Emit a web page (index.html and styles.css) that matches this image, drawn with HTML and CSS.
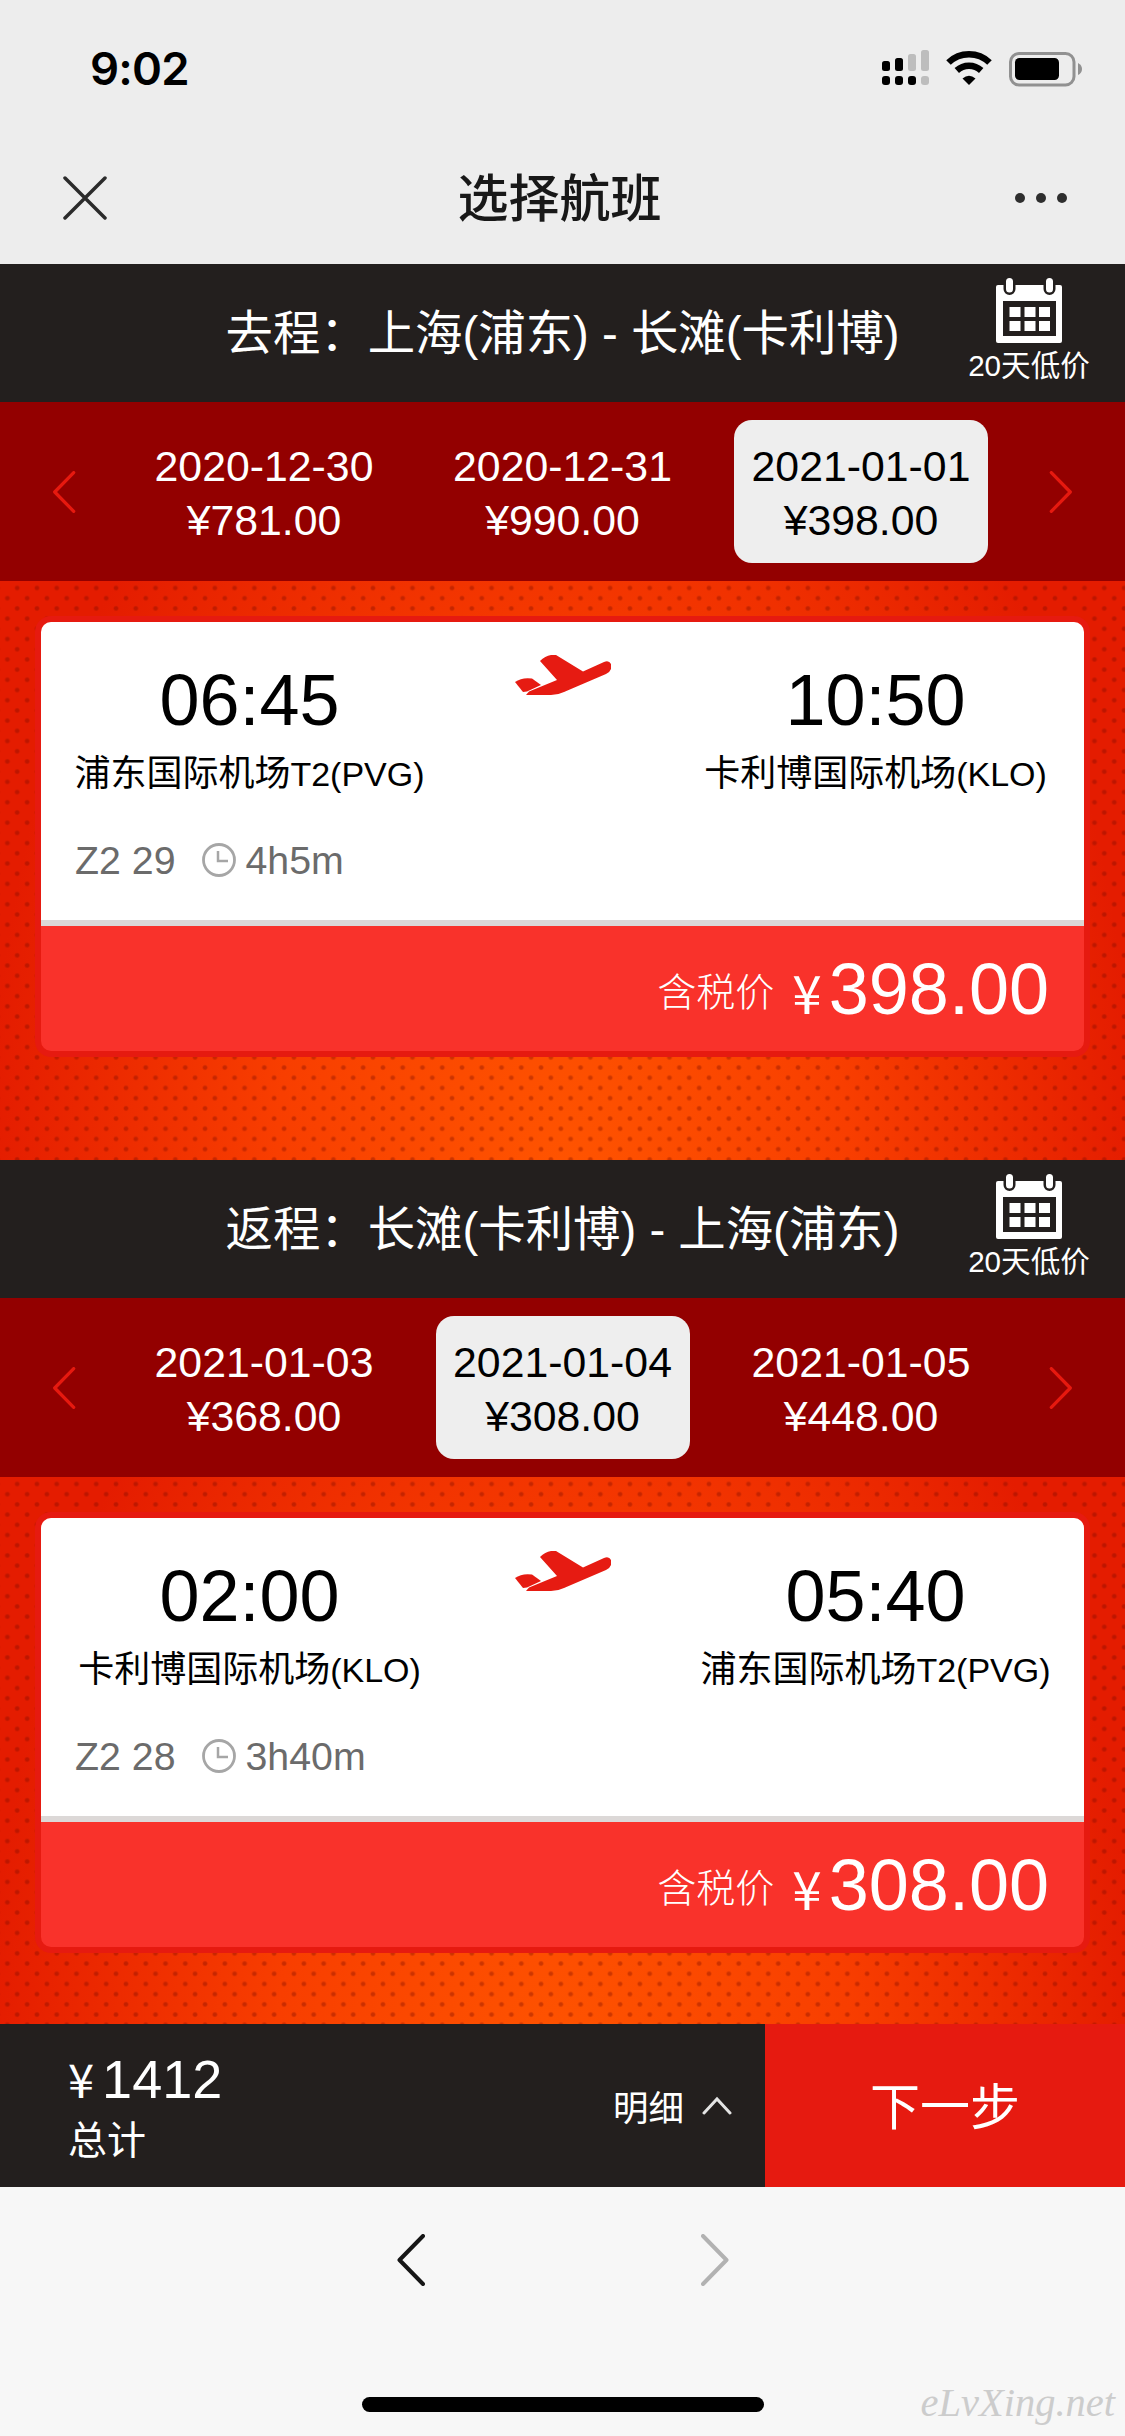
FILE: index.html
```html
<!DOCTYPE html>
<html lang="zh-CN">
<head>
<meta charset="utf-8">
<title>选择航班</title>
<link rel="stylesheet" href="styles.css">
</head>
<body>
<svg width="0" height="0" class="defs">
  <symbol id="calendar" viewBox="0 0 66 65">
    <path fill="#fff" d="M2 7H64Q66 7 66 9V63Q66 65 64 65H2Q0 65 0 63V9Q0 7 2 7Z"/>
    <path fill="#231f1e" d="M7 23H60V58H7Z"/>
    <path stroke="#231f1e" stroke-width="12" stroke-linecap="round" d="M13.5 0V11M53.5 0V11"/>
    <path stroke="#fff" stroke-width="7" stroke-linecap="round" d="M13.5 3.5V11M53.5 3.5V11"/>
    <path fill="#fff" d="M13.5 29h11v10h-11zM28.5 29h11v10h-11zM43 29h11v10h-11zM13.5 43h11v10h-11zM28.5 43h11v10h-11zM43 43h11v10h-11z"/>
  </symbol>
  <symbol id="plane" viewBox="0 0 96 40">
    <path fill="#e61b12" d="M25 6Q30 1 36 0H41L68 16.500L89 7Q94 5 96 9V14Q95 17 91 19L49 37Q43 40 36 40H11L14 36.500L42 25Z"/>
    <path fill="#e61b12" d="M0 27Q7 22 17 23.500L26 30L12 36.500L8 37Z"/>
  </symbol>
  <symbol id="clock" viewBox="0 0 34 34">
    <circle cx="17" cy="17" r="15.5" fill="none" stroke="#a6a6a6" stroke-width="2.8"/>
    <path fill="none" stroke="#a6a6a6" stroke-width="2.5" d="M16 8V18H26"/>
  </symbol>
  <symbol id="left" viewBox="0 0 28 52"><path fill="none" stroke="currentColor" stroke-linecap="round" stroke-linejoin="round" d="M26 2L2.5 26L26 50"/></symbol>
  <symbol id="right" viewBox="0 0 28 52"><path fill="none" stroke="currentColor" stroke-linecap="round" stroke-linejoin="round" d="M2 2L25.5 26L2 50"/></symbol>
</svg>

<header class="status">
  <span class="time">9:02</span>
  <svg class="status-icons" viewBox="0 0 202 40" width="202" height="40">
    <g fill="#000"><rect x="1" y="13" width="8" height="10" rx="2.5"/><rect x="14" y="10" width="8" height="13" rx="2.5"/><rect x="1" y="28" width="8" height="9" rx="3"/><rect x="14" y="28" width="8" height="9" rx="3"/><rect x="27" y="28" width="8" height="9" rx="3"/></g>
    <g fill="#bdbdbd"><rect x="27" y="6" width="8" height="17" rx="2.5"/><rect x="40" y="2" width="8" height="21" rx="2.5"/><rect x="40" y="28" width="8" height="9" rx="3"/></g>
    <g fill="none" stroke="#000" stroke-width="6.5"><path d="M67.500 14.500A29.500 29.500 0 0 1 108.500 14.500"/><path d="M75.800 22.500A18 18 0 0 1 100.200 22.500"/></g>
    <path d="M81.500 30.500Q88 25 94.500 30.500L88 37Z"/>
    <rect x="129.500" y="5.500" width="63.500" height="31.500" rx="8.5" fill="none" stroke="#919191" stroke-width="3"/>
    <rect x="134" y="10" width="44" height="22" rx="4.5"/>
    <path fill="#919191" d="M197 15Q201 17 201 21T197 27Z"/>
  </svg>
</header>
<nav class="titlebar">
  <svg class="close" viewBox="0 0 44 44" width="44" height="44"><path stroke="#2b2b2b" stroke-width="3.500" stroke-linecap="round" d="M2 2L42 42M42 2L2 42"/></svg>
  <h1>选择航班</h1>
  <span class="dots"><i></i><i></i><i></i></span>
</nav>

<main>
  <section class="leg">
    <div class="route"><h2>去程：上海(浦东) - 长滩(卡利博)</h2>
      <div class="lowprice"><svg width="66" height="65"><use href="#calendar"/></svg><span>20天低价</span></div></div>
    <div class="dates">
      <svg class="arrow"><use href="#left"/></svg>
      <div class="days">
        <div class="day"><span>2020-12-30</span><span>¥781.00</span></div>
        <div class="day"><span>2020-12-31</span><span>¥990.00</span></div>
        <div class="day active"><span>2021-01-01</span><span>¥398.00</span></div>
      </div>
      <svg class="arrow"><use href="#right"/></svg>
    </div>
    <div class="stage">
      <article class="card">
        <div class="info">
          <div class="trip">
            <div class="end"><strong>06:45</strong><span>浦东国际机场<small>T2(PVG)</small></span></div>
            <svg class="plane" width="96" height="40"><use href="#plane"/></svg>
            <div class="end"><strong>10:50</strong><span>卡利博国际机场<small>(KLO)</small></span></div>
          </div>
          <div class="meta"><span>Z2 29</span><svg width="34" height="34"><use href="#clock"/></svg><span>4h5m</span></div>
        </div>
        <div class="fare"><span class="label">含税价</span><span class="yen">¥</span><span class="amount">398.00</span></div>
      </article>
    </div>
  </section>
  <section class="leg">
    <div class="route"><h2>返程：长滩(卡利博) - 上海(浦东)</h2>
      <div class="lowprice"><svg width="66" height="65"><use href="#calendar"/></svg><span>20天低价</span></div></div>
    <div class="dates">
      <svg class="arrow"><use href="#left"/></svg>
      <div class="days">
        <div class="day"><span>2021-01-03</span><span>¥368.00</span></div>
        <div class="day active"><span>2021-01-04</span><span>¥308.00</span></div>
        <div class="day"><span>2021-01-05</span><span>¥448.00</span></div>
      </div>
      <svg class="arrow"><use href="#right"/></svg>
    </div>
    <div class="stage last">
      <article class="card">
        <div class="info">
          <div class="trip">
            <div class="end"><strong>02:00</strong><span>卡利博国际机场<small>(KLO)</small></span></div>
            <svg class="plane" width="96" height="40"><use href="#plane"/></svg>
            <div class="end"><strong>05:40</strong><span>浦东国际机场<small>T2(PVG)</small></span></div>
          </div>
          <div class="meta"><span>Z2 28</span><svg width="34" height="34"><use href="#clock"/></svg><span>3h40m</span></div>
        </div>
        <div class="fare"><span class="label">含税价</span><span class="yen">¥</span><span class="amount">308.00</span></div>
      </article>
    </div>
  </section>
</main>

<div class="checkout">
  <div class="total"><div class="sum"><span class="yen">¥</span>1412</div><div class="caption">总计</div></div>
  <div class="detail">明细<svg width="30" height="19" viewBox="0 0 30 19"><path fill="none" stroke="#e4e4e4" stroke-width="3" stroke-linecap="round" d="M2 17L15 3L28 17"/></svg></div>
  <div class="next">下一步</div>
</div>
<footer class="browser">
  <div class="history"><svg class="back"><use href="#left"/></svg><svg class="forward"><use href="#right"/></svg></div>
  <div class="home"></div>
  <span class="mark">eLvXing.net</span>
</footer>
</body>
</html>
```
FILE: styles.css
```css
* { box-sizing: border-box; margin: 0; padding: 0; }
body {
  width: 1125px; height: 2436px; overflow: hidden;
  display: flex; flex-direction: column;
  background: #ededed; color: #000;
  font-family: "Liberation Sans", "Noto Sans CJK SC", sans-serif;
}
svg { display: block; flex: none; }
.defs { position: absolute; }

.status { height: 132px; display: flex; justify-content: space-between; align-items: flex-start; padding: 41px 42px 0 90px; }
.time { font: 600 45.5px/56px Inter, sans-serif; letter-spacing: -.8px; }
.status-icons { margin-top: 7px; }
.titlebar { height: 132px; display: grid; grid-template-columns: 1fr auto 1fr; align-items: center; padding: 0 58px 0 63px; }
.titlebar h1 { font: 500 51px/70px "Noto Sans CJK SC", sans-serif; color: #181818; margin: 0 11px 6px 0; }
.dots { justify-self: end; display: flex; gap: 10.5px; }
.dots i { width: 10.5px; height: 10.5px; border-radius: 50%; background: #2e2e2e; }

.route { height: 138px; background: #231f1e; color: #fff; display: grid; grid-template-columns: 190px 745px 190px; }
.route h2 { grid-column: 2; font-size: 47.4px; font-weight: 400; line-height: 140px; text-align: center; white-space: nowrap; }
.lowprice { display: flex; flex-direction: column; align-items: center; padding-top: 14px; width: 188px; }
.lowprice span { font-size: 29.6px; line-height: 40px; margin-top: 3px; }

.dates { height: 179px; background: #930000; color: #fff; display: flex; align-items: center; justify-content: space-between; padding: 0 52px; }
.days { display: flex; gap: 44.5px; }
.day { width: 254px; height: 143px; border-radius: 18px; display: flex; flex-direction: column; align-items: center; padding-top: 19px; font-size: 42.8px; line-height: 54px; }
.day.active { background: #eee; color: #000; }
.arrow { width: 24px; height: 42px; color: #e6190f; stroke-width: 4; }

.stage {
  height: 579px; padding: 35px 35px 0;
  background:
    radial-gradient(circle 3px, rgba(120,10,0,.36) 50%, transparent) 7.3px -3.2px / 19.77px 20.41px,
    radial-gradient(circle 3px, rgba(120,10,0,.36) 50%, transparent) -2.5px 7px / 19.77px 20.41px,
    radial-gradient(640px 1100px at 50% 620px, #ff5500, #f83e00 45%, #e41c00 90%);
}
.stage.last { height: 547px; }
.card { height: 441px; border: 6px solid #e61a10; border-radius: 16px; overflow: hidden; background: #f9322b; }
.info { height: 304px; background: #fff; border-bottom: 6px solid #dcd8d7; }
.trip { display: grid; grid-template-columns: 417px 209px 417px; height: 190px; }
.end { display: flex; flex-direction: column; align-items: center; padding-top: 37px; }
.end strong { font-size: 72px; font-weight: 400; line-height: 82px; }
.end span { font-size: 36px; line-height: 52px; margin-top: 7px; white-space: nowrap; }
.end small { font-size: 34px; }
.plane { justify-self: center; margin-top: 33px; }
.meta { display: flex; align-items: center; height: 96px; padding-left: 34px; font-size: 39.3px; color: #6b6b6b; }
.meta svg { margin: 0 10px 0 26px; }
.fare { height: 125px; display: flex; justify-content: flex-end; align-items: baseline; padding: 22px 35px 0 0; color: #fff; line-height: 82px; }
.label { align-self: center; margin: -22px 18px 0 0; font-size: 39px; font-weight: 300; font-family: "Noto Sans CJK SC", sans-serif; }
.yen { font-family: "Noto Sans CJK SC", sans-serif; }
.fare .yen { font-size: 53px; margin-right: 7px; }
.amount { font-size: 72px; }

.checkout { height: 163px; background: #231f1e; color: #fff; display: flex; }
.total { padding: 23px 0 0 68px; flex: 1; }
.sum { font-size: 54px; line-height: 62px; display: flex; align-items: baseline; }
.sum .yen { font-size: 47px; margin-right: 8px; }
.caption { font-size: 39px; line-height: 62px; }
.detail { display: flex; align-items: center; gap: 18px; padding-right: 33px; font-size: 35.5px; }
.next { width: 360px; background: #e61a10; text-align: center; font-size: 50px; line-height: 168px; }

.browser { position: relative; height: 249px; background: #f7f7f7; display: flex; flex-direction: column; align-items: center; justify-content: space-between; padding: 47px 0 24px; }
.history { display: flex; gap: 276px; }
.history svg { width: 28px; height: 52px; stroke-width: 4; color: #161616; }
.history .forward { color: #b2b2b2; }
.home { width: 402px; height: 15px; border-radius: 8px; background: #000; }
.mark { position: absolute; right: 10px; bottom: 10px; font: italic 40.5px/46px "Liberation Serif", serif; color: #ccc; }
```
